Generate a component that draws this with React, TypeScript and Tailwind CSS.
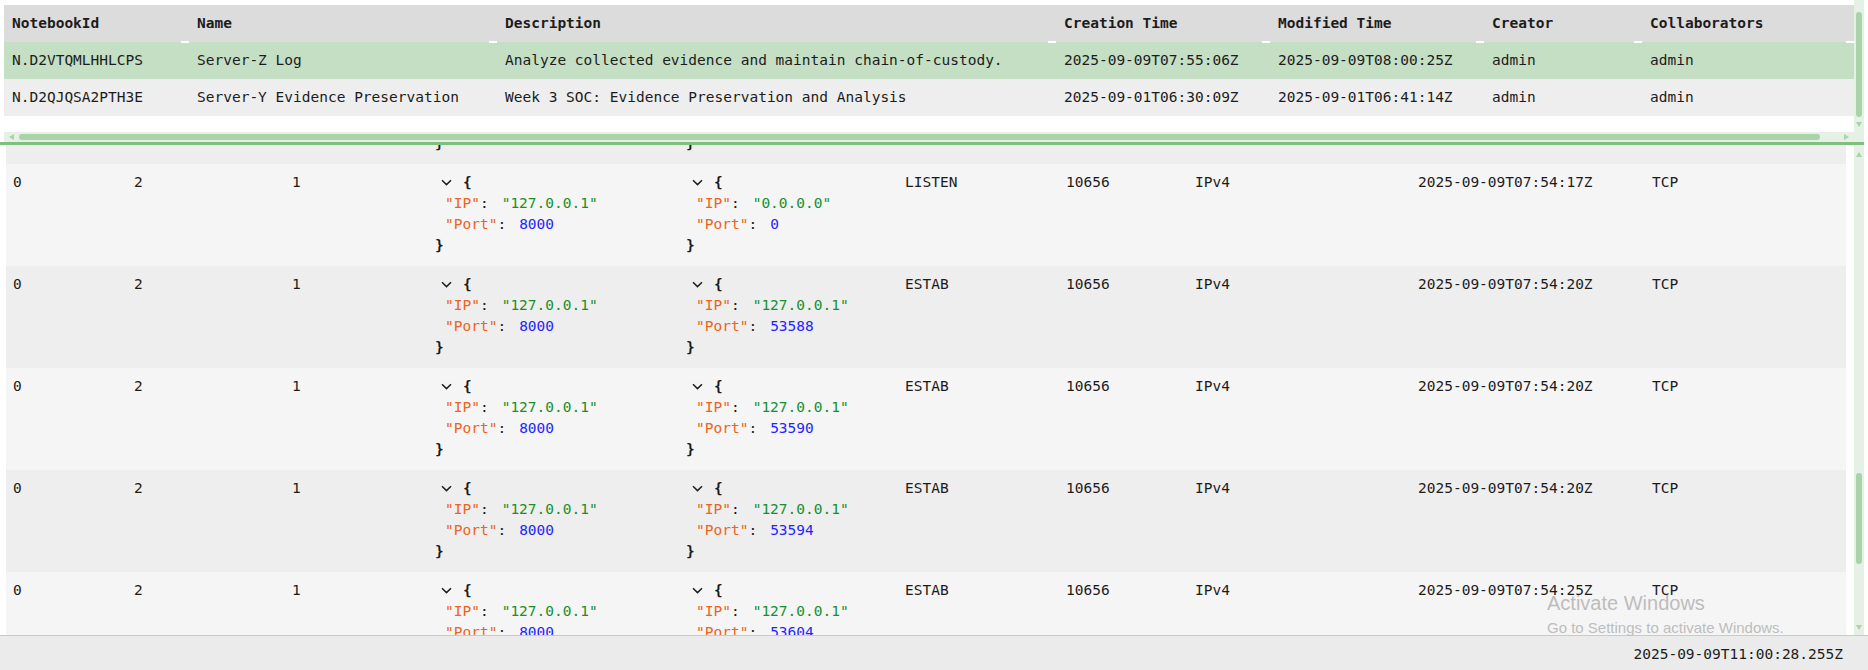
import React from 'react'

const topCols = ['w-[185px]', 'w-[308px]', 'w-[559px]', 'w-[214px]', 'w-[214px]', 'w-[158px]', 'w-[212px]']
const botCols = [
  'w-[121px]', 'w-[158px]', 'w-[143px]', 'w-[251px]', 'w-[219px]',
  'w-[161px]', 'w-[129px]', 'w-[223px]', 'w-[234px]', 'w-[201px]',
]

const headers = ['NotebookId', 'Name', 'Description', 'Creation Time', 'Modified Time', 'Creator', 'Collaborators']

const notebooks = [
  ['N.D2VTQMLHHLCPS', 'Server-Z Log', 'Analyze collected evidence and maintain chain-of-custody.', '2025-09-09T07:55:06Z', '2025-09-09T08:00:25Z', 'admin', 'admin'],
  ['N.D2QJQSA2PTH3E', 'Server-Y Evidence Preservation', 'Week 3 SOC: Evidence Preservation and Analysis', '2025-09-01T06:30:09Z', '2025-09-01T06:41:14Z', 'admin', 'admin'],
]

type Sock = {
  local: [string, number]
  remote: [string, number]
  state: string
  time: string
}

const sockets: Sock[] = [
  { local: ['127.0.0.1', 8000], remote: ['127.0.0.1', 53586], state: 'ESTAB', time: '2025-09-09T07:54:17Z' },
  { local: ['127.0.0.1', 8000], remote: ['0.0.0.0', 0], state: 'LISTEN', time: '2025-09-09T07:54:17Z' },
  { local: ['127.0.0.1', 8000], remote: ['127.0.0.1', 53588], state: 'ESTAB', time: '2025-09-09T07:54:20Z' },
  { local: ['127.0.0.1', 8000], remote: ['127.0.0.1', 53590], state: 'ESTAB', time: '2025-09-09T07:54:20Z' },
  { local: ['127.0.0.1', 8000], remote: ['127.0.0.1', 53594], state: 'ESTAB', time: '2025-09-09T07:54:20Z' },
  { local: ['127.0.0.1', 8000], remote: ['127.0.0.1', 53604], state: 'ESTAB', time: '2025-09-09T07:54:25Z' },
]

function Chevron() {
  return (
    <svg width="11" height="7" viewBox="0 0 11 7" fill="none">
      <path d="M1 1.2 L5.5 5.6 L10 1.2" stroke="#1f1f1f" strokeWidth="1.5" />
    </svg>
  )
}

function JsonAddr({ ip, port }: { ip: string; port: number }) {
  return (
    <div className="leading-[21px]">
      <div className="flex items-center h-[21px]">
        <span className="w-[28px] pl-[6px] flex items-center">
          <Chevron />
        </span>
        <span className="font-bold">{'{'}</span>
      </div>
      <div className="pl-[10px] whitespace-pre">
        <span className="text-[#ec6420]">"IP"</span>:<span className="ml-[13px] text-[#16902c]">"{ip}"</span>
      </div>
      <div className="pl-[10px] whitespace-pre">
        <span className="text-[#ec6420]">"Port"</span>:<span className="ml-[13px] text-[#2424ff]">{port}</span>
      </div>
      <div className="font-bold">{'}'}</div>
    </div>
  )
}

function Arrow({ dir }: { dir: 'up' | 'down' | 'left' | 'right' }) {
  const d = {
    up: 'M0 5 L3 0 L6 5 Z',
    down: 'M0 0 L6 0 L3 5 Z',
    left: 'M5 0 L5 6 L0 3 Z',
    right: 'M0 0 L5 3 L0 6 Z',
  }[dir]
  const vertical = dir === 'up' || dir === 'down'
  return (
    <svg width={vertical ? 6 : 5} height={vertical ? 5 : 6} viewBox={vertical ? '0 0 6 5' : '0 0 5 6'}>
      <path d={d} fill="#a9d4a9" />
    </svg>
  )
}

export default function App() {
  return (
    <div className="w-[1868px] h-[670px] bg-white relative overflow-hidden flex flex-col font-['DejaVu_Sans_Mono','Liberation_Mono',monospace] text-[14.5px] text-[#1c1c1c]">
      {/* notebooks */}
      <div className="h-[132px] flex">
        <div className="w-[1854px] pl-[4px] pt-[5px] overflow-hidden">
          <div className="w-[1850px]">
            <div className="flex h-[37px] bg-[#dcdcdc] font-bold">
              {headers.map((h, i) => (
                <div key={h} className={`${topCols[i]} relative px-[8px] flex items-center whitespace-nowrap`}>
                  {h}
                  <span className="absolute right-0 bottom-[-1px] w-[8px] h-[2px] bg-white" />
                </div>
              ))}
            </div>
            {notebooks.map((row, r) => (
              <div key={row[0]} className={`flex h-[37px] ${r === 0 ? 'bg-[#c5dfc5]' : 'bg-[#eeeeee]'}`}>
                {row.map((c, i) => (
                  <div key={i} className={`${topCols[i]} px-[8px] flex items-center whitespace-nowrap overflow-hidden`}>
                    {c}
                  </div>
                ))}
              </div>
            ))}
          </div>
        </div>
        <div className="w-[10px] bg-[#e4f1e4] flex flex-col items-center">
          <div className="mt-[12px] w-[6px] h-[105px] rounded-full bg-[#a9d4a9]" />
          <div className="mt-[5px]">
            <Arrow dir="down" />
          </div>
        </div>
      </div>

      {/* horizontal scrollbar */}
      <div className="h-[10px] flex">
        <div className="w-[4px]" />
        <div className="w-[1850px] bg-[#e4f1e4] flex items-center">
          <div className="ml-[5px]">
            <Arrow dir="left" />
          </div>
          <div className="ml-[5px] w-[1801px] h-[6px] rounded-full bg-[#a9d4a9]" />
          <div className="ml-[24px]">
            <Arrow dir="right" />
          </div>
        </div>
        <div className="w-[10px] bg-[#e4f1e4]" />
      </div>

      {/* splitter */}
      <div className="h-[3px] w-[1864px] bg-[#7fc081]" />

      {/* sockets */}
      <div className="h-[490px] flex">
        <div className="w-[1846px] pl-[6px] overflow-hidden">
          <div className="w-[1840px] mt-[-83px]">
            {sockets.map((s, r) => (
              <div
                key={r}
                className={`flex pt-[8px] pb-[10px] leading-[21px] ${r % 2 === 0 ? 'bg-[#eeeeee]' : 'bg-[#f5f5f5]'}`}
              >
                <div className={`${botCols[0]} pl-[7px]`}>0</div>
                <div className={`${botCols[1]} pl-[7px]`}>2</div>
                <div className={`${botCols[2]} pl-[7px]`}>1</div>
                <div className={`${botCols[3]} pl-[7px]`}>
                  <JsonAddr ip={s.local[0]} port={s.local[1]} />
                </div>
                <div className={`${botCols[4]} pl-[7px]`}>
                  <JsonAddr ip={s.remote[0]} port={s.remote[1]} />
                </div>
                <div className={`${botCols[5]} pl-[7px]`}>{s.state}</div>
                <div className={`${botCols[6]} pl-[7px]`}>10656</div>
                <div className={`${botCols[7]} pl-[7px]`}>IPv4</div>
                <div className={`${botCols[8]} pl-[7px] whitespace-nowrap`}>{s.time}</div>
                <div className={`${botCols[9]} pl-[7px]`}>TCP</div>
              </div>
            ))}
          </div>
        </div>
        <div className="w-[8px]" />
        <div className="w-[10px] bg-[#e4f1e4] flex flex-col items-center">
          <div className="mt-[7px]">
            <Arrow dir="up" />
          </div>
          <div className="mt-[316px] w-[6px] h-[91px] rounded-full bg-[#a9d4a9]" />
          <div className="mt-auto mb-[5px]">
            <Arrow dir="down" />
          </div>
        </div>
      </div>

      {/* status bar */}
      <div className="h-[35px] border-t border-[#c9c9c9] bg-[#ebebeb] flex items-center justify-end pr-[25px] pt-[3px]">
        2025-09-09T11:00:28.255Z
      </div>

      {/* os watermark */}
      <div className="absolute left-[1547px] top-[590px] text-[#bdbdbd] font-['Liberation_Sans',sans-serif] pointer-events-none">
        <div className="text-[20px] leading-[26px]">Activate Windows</div>
        <div className="mt-[2px] text-[15px] leading-[20px]">Go to Settings to activate Windows.</div>
      </div>
    </div>
  )
}
